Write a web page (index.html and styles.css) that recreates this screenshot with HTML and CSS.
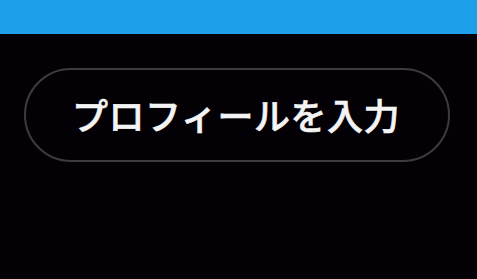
FILE: index.html
```html
<!DOCTYPE html>
<html lang="ja">

<head>
  <meta charset="UTF-8">
  <meta name="viewport" content="width=device-width, initial-scale=1.0">
  <title>プロフィール</title>

  <link rel="stylesheet" href="styles.css">
</head>

<body>
  <div class="topBar"></div>

  <div class="content">
    <button type="button" class="profileBtn">プロフィールを入力</button>
  </div>
</body>

</html>
```

FILE: styles.css
```css
body {
  margin: 0;
  background-color: #030105;
  font-family: "Noto Sans CJK JP", "Noto Sans", sans-serif;
}

.topBar {
  height: 34px;
  background-color: #1d9fe9;
}

.content {
  padding: 34px 0 0 24px;
}

.profileBtn {
  display: flex;
  align-items: center;
  justify-content: center;
  box-sizing: border-box;
  width: 426px;
  height: 94px;
  border: 2px solid #3c3c40;
  border-radius: 47px;
  background: transparent;
  color: #f4f4f4;
  font-family: inherit;
  font-size: 36px;
  font-weight: 500;
  -webkit-text-stroke: 0.6px #f4f4f4;
  letter-spacing: 0.5px;
  padding: 0 2px 2px 0;
}
```
